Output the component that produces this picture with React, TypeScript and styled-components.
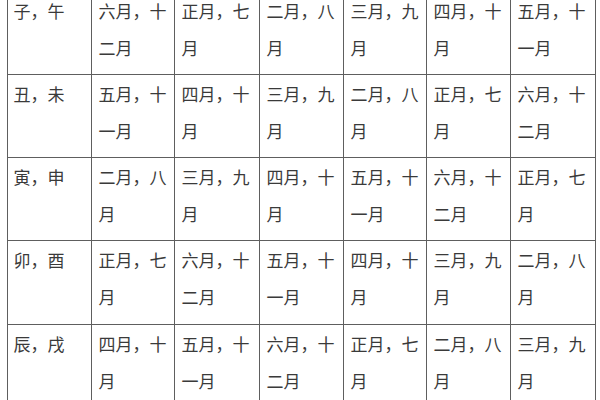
import React from "react";
import styled, { createGlobalStyle } from "styled-components";

const Global = createGlobalStyle`
  html, body { margin: 0; padding: 0; background: #ffffff; }
  body { font-family: "Noto Sans CJK SC", "Noto Sans", sans-serif; }
`;

const Page = styled.div`
  padding-left: 6.5px;
  overflow: hidden;
  height: 400px;
`;

const Table = styled.table`
  border-collapse: collapse;
  table-layout: fixed;
  width: 588px;
  margin-top: -9.5px;
  color: #3a3a3a;
  font-size: 17px;
`;

const Cell = styled.td<{ $first?: boolean }>`
  border: 1px solid #5e5e5e;
  vertical-align: top;
  line-height: 37px;
  padding: 0 ${(p) => (p.$first ? "6px" : "6px")} 8.33px
    ${(p) => (p.$first ? "6px" : "7px")};
  word-break: break-all;
`;

const rows: string[][] = [
  ["子，午", "六月，十二月", "正月，七月", "二月，八月", "三月，九月", "四月，十月", "五月，十一月"],
  ["丑，未", "五月，十一月", "四月，十月", "三月，九月", "二月，八月", "正月，七月", "六月，十二月"],
  ["寅，申", "二月，八月", "三月，九月", "四月，十月", "五月，十一月", "六月，十二月", "正月，七月"],
  ["卯，酉", "正月，七月", "六月，十二月", "五月，十一月", "四月，十月", "三月，九月", "二月，八月"],
  ["辰，戌", "四月，十月", "五月，十一月", "六月，十二月", "正月，七月", "二月，八月", "三月，九月"],
];

const widths = [84, 83, 85, 84, 83, 84, 85];

export default function App() {
  return (
    <Page>
      <Global />
      <Table>
        <colgroup>
          {widths.map((w, i) => (
            <col key={i} style={{ width: w }} />
          ))}
        </colgroup>
        <tbody>
          {rows.map((r, i) => (
            <tr key={i}>
              {r.map((c, j) => (
                <Cell key={j} $first={j === 0}>
                  {c}
                </Cell>
              ))}
            </tr>
          ))}
        </tbody>
      </Table>
    </Page>
  );
}
